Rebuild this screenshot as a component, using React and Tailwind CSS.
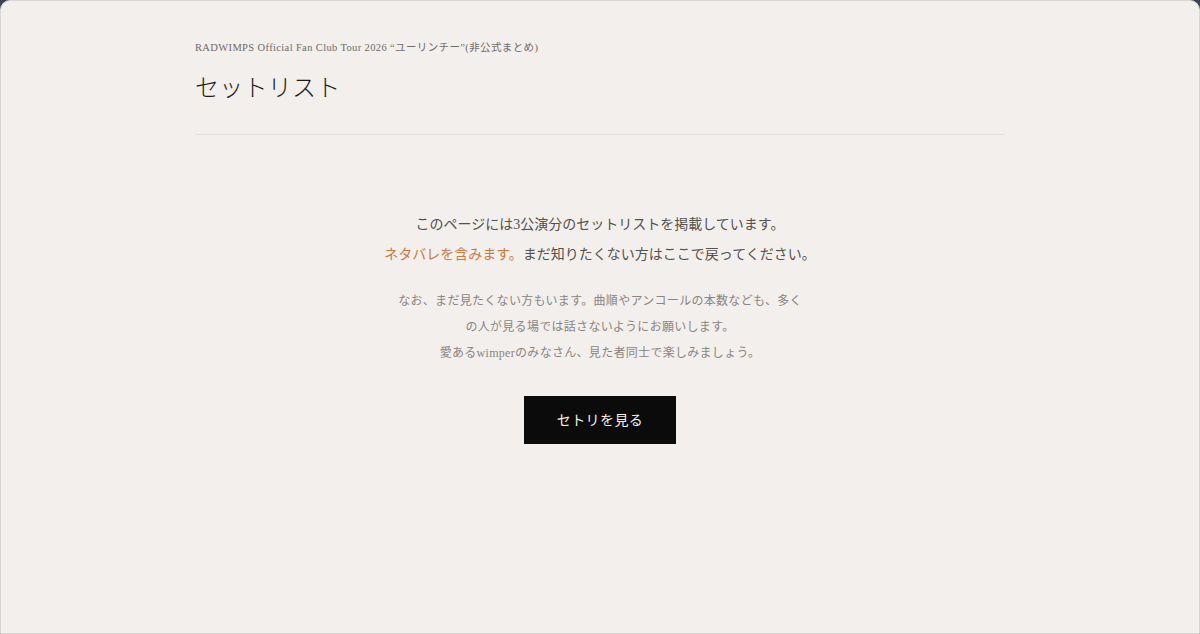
import React from 'react';

const serifJa = { fontFamily: '"Liberation Serif", "Noto Sans CJK JP", serif' };

function App() {
  return (
    <div className="min-h-screen bg-[#3b4450]">
      <div
        className="min-h-[634px] bg-[#f3efec] rounded-t-[10px] border border-[#d9d5d2]"
        style={serifJa}
      >
        <div className="max-w-[810px] mx-auto pt-[39px]">
          <p className="text-[10.5px] leading-[16px] tracking-[0.035em] text-[#6f6a66]">
            RADWIMPS Official Fan Club Tour 2026 “ユーリンチー”(非公式まとめ)
          </p>
          <h1 className="mt-[16px] text-[24px] leading-[32px] font-light text-[#1c1a19] tracking-[0.01em]">
            セットリスト
          </h1>
          <div className="mt-[30px] h-px bg-[#e8e3df]" />

          <div className="mt-[75px] flex flex-col items-center text-center">
            <p className="text-[14px] leading-[30px] text-[#55514e]">
              このページには3公演分のセットリストを掲載しています。
            </p>
            <p className="text-[14px] leading-[30px] text-[#55514e]">
              <span className="text-[#c97a44]">ネタバレを含みます。</span>
              まだ知りたくない方はここで戻ってください。
            </p>

            <div className="mt-[18px] text-[12px] leading-[26px] tracking-[0.025em] text-[#8a8581]">
              <p>なお、まだ見たくない方もいます。曲順やアンコールの本数なども、多く</p>
              <p>の人が見る場では話さないようにお願いします。</p>
              <p>愛あるwimperのみなさん、見た者同士で楽しみましょう。</p>
            </div>

            <button
              type="button"
              className="mt-[30px] w-[152px] h-[48px] bg-[#0b0b0b] text-[#f3efec] text-[14px] tracking-[0.03em]"
            >
              セトリを見る
            </button>
          </div>
        </div>
      </div>
    </div>
  );
}

export default App;
